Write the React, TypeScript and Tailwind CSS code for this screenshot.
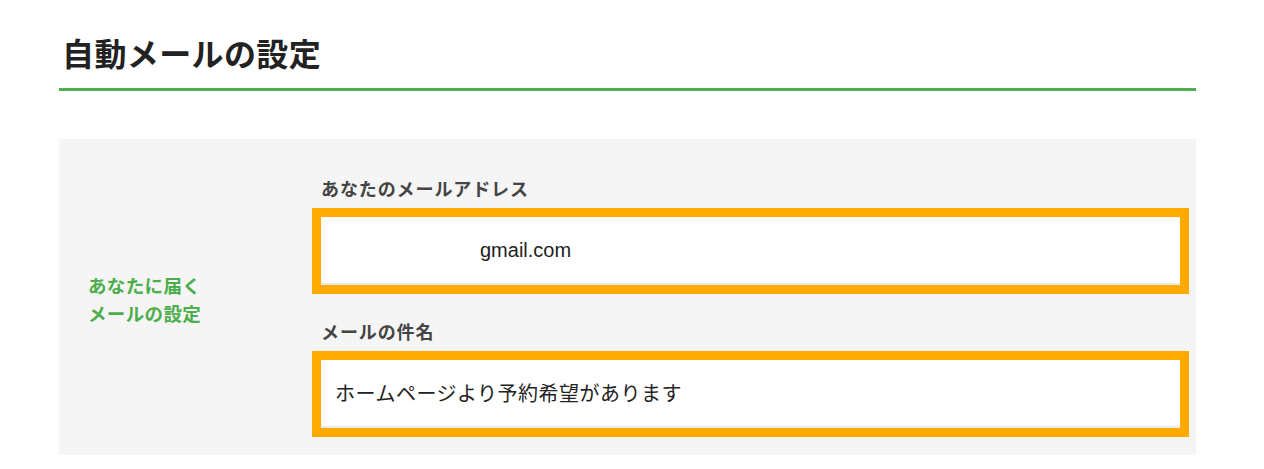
import React from 'react';

const jp = "font-['Noto_Sans_CJK_JP','Noto_Sans',sans-serif]";

function Field({ label, value, indent, className }: { label: string; value: string; indent?: boolean; className?: string }) {
  return (
    <div className={className}>
      <div className="text-[18px] leading-[18px] font-bold text-[#444] tracking-[0.05em]">{label}</div>
      <div className="mt-[20px] outline-[9px] outline-solid outline-[#ffaa00]">
        <div className="h-[68px] bg-white rounded-[3px] border-b-2 border-[#e8e8e8] flex items-center">
          {indent ? (
            <span className="pl-[159px] text-[20px] text-[#222] font-['Liberation_Sans',Arial,sans-serif]">{value}</span>
          ) : (
            <span className="pl-[14px] text-[20px] text-[#222] tracking-[0.025em]">{value}</span>
          )}
        </div>
      </div>
    </div>
  );
}

export default function App() {
  return (
    <div className={`w-[1264px] h-[469px] bg-white overflow-hidden ${jp}`}>
      <div className="ml-[59px] w-[1137px]">
        {/* Page title */}
        <div className="pt-[36px] pb-[20px] pl-[3px]">
          <h1 className="text-[32px] leading-[32px] font-bold text-[#222] tracking-[0.012em]">自動メールの設定</h1>
        </div>
        <div className="h-[3px] bg-[#4caf50]" />

        {/* Settings panel */}
        <div className="mt-[48px] bg-[#f5f5f5] flex">
          <div className="w-[262px] flex items-center pl-[29px] pt-[4px]">
            <p className="text-[18.5px] leading-[28px] font-bold text-[#4cae4c] tracking-[0.02em]">
              あなたに届く
              <br />
              メールの設定
            </p>
          </div>
          <div className="flex-1 pr-[16px] pt-[40px] pb-[27px]">
            <Field label="あなたのメールアドレス" value="gmail.com" indent />
            <Field className="mt-[37px]" label="メールの件名" value="ホームページより予約希望があります" />
          </div>
        </div>
      </div>
    </div>
  );
}
